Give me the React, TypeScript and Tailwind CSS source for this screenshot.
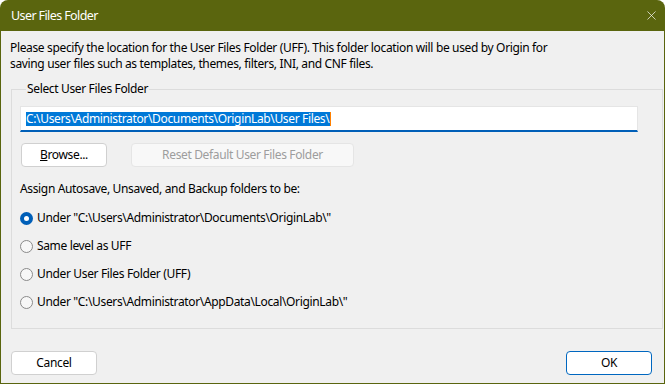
import { X } from 'lucide-react';

const font = { fontFamily: '"Segoe UI", "Noto Sans", "Open Sans", sans-serif' };

function Radio({ checked, label }: { checked?: boolean; label: string }) {
    return (
        <div className="flex items-center h-[16px] gap-[4px]">
            {checked ? (
                <span className="w-[13px] h-[13px] rounded-full bg-[#005fb8] flex items-center justify-center">
                    <span className="w-[5px] h-[5px] rounded-full bg-white" />
                </span>
            ) : (
                <span className="w-[13px] h-[13px] rounded-full border border-[#8a8a8a] bg-[#f7f7f7]" />
            )}
            <span>{label}</span>
        </div>
    );
}

export default function App() {
    return (
        <div className="w-[667px] h-[384px] bg-white" style={font}>
            <div className="w-[665px] h-[384px] bg-[#5a650e] rounded-t-[8px] flex flex-col text-[12px] leading-[16px] tracking-[-0.35px] text-black">
                <div className="h-[31px] flex items-center justify-between pl-[11px] pr-[6px] text-white">
                    <span className="text-[12.5px] tracking-[-0.6px]">User Files Folder</span>
                    <X size={15} strokeWidth={1.1} className="text-white" />
                </div>

                <div className="flex-1 mx-px mb-px bg-[#f0f0f0] flex flex-col">
                    <p className="pt-[9px] pl-[9px]">
                        Please specify the location for the User Files Folder (UFF). This folder location will be used by Origin for
                        <br />
                        saving user files such as templates, themes, filters, INI, and CNF files.
                    </p>

                    <fieldset className="mt-[9px] ml-[10px] w-[652px] h-[248px] border border-[#dcdcdc] px-[8px] pt-[9px]">
                        <legend className="ml-[6px] px-[1px]">Select User Files Folder</legend>

                        <div className="w-[618px] h-[26px] bg-white border border-[#e5e5e5] border-b-2 border-b-[#005fb8] flex items-center pl-[5px]">
                            <span className="bg-[#0078d7] text-white leading-[14px] pr-[1px] border-r border-r-[#ff8000]">
                                C:\Users\Administrator\Documents\OriginLab\User Files\
                            </span>
                        </div>

                        <div className="flex gap-[24px] mt-[11px] ml-px">
                            <button className="w-[86px] h-[24px] bg-white border border-[#d0d0d0] rounded-[4px]">
                                <span className="underline">B</span>rowse...
                            </button>
                            <button className="w-[223px] h-[24px] bg-[#f8f8f8] border border-[#e5e5e5] rounded-[4px] text-[#9d9d9d]">
                                Reset Default User Files Folder
                            </button>
                        </div>

                        <p className="mt-[14px]">Assign Autosave, Unsaved, and Backup folders to be:</p>

                        <div className="flex flex-col gap-[12px] mt-[13px]">
                            <Radio checked label={'Under "C:\\Users\\Administrator\\Documents\\OriginLab\\"'} />
                            <Radio label="Same level as UFF" />
                            <Radio label="Under User Files Folder (UFF)" />
                            <Radio label={'Under "C:\\Users\\Administrator\\AppData\\Local\\OriginLab\\"'} />
                        </div>
                    </fieldset>

                    <div className="flex justify-between pl-[10px] pr-[12px] mt-[22px]">
                        <button className="w-[86px] h-[24px] bg-white border border-[#d0d0d0] rounded-[4px]">Cancel</button>
                        <button className="w-[86px] h-[24px] bg-white border border-[#0067c0] rounded-[4px]">OK</button>
                    </div>
                </div>
            </div>
        </div>
    );
}
